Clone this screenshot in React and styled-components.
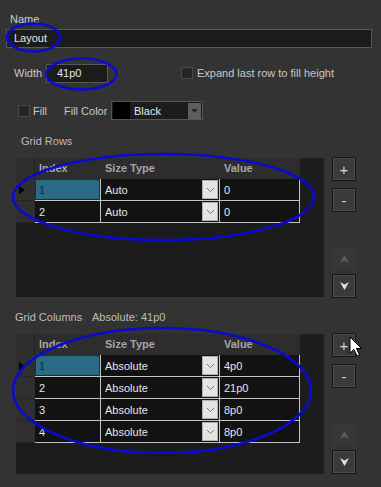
import React from "react";
import styled, { createGlobalStyle } from "styled-components";

const Global = createGlobalStyle`
  html, body {
    margin: 0;
    padding: 0;
    background: #333333;
  }
  body {
    font-family: "Liberation Sans", Arial, sans-serif;
    font-size: 11px;
    color: #cfcfcf;
  }
`;

const Page = styled.div`
  position: relative;
  width: 381px;
  height: 487px;
  box-sizing: border-box;
  padding-top: 12px;
  background: #333333;
  overflow: hidden;
`;

const Label = styled.div`
  height: 14px;
  line-height: 14px;
  margin-left: ${(p) => p.left || 0}px;
  margin-top: ${(p) => p.top || 0}px;
  color: ${(p) => p.color || "#cccccc"};
  white-space: nowrap;
`;

const TextBox = styled.div`
  box-sizing: border-box;
  flex-shrink: 0;
  height: 19px;
  margin-left: ${(p) => p.left || 0}px;
  width: ${(p) => p.w}px;
  background: #1b1b1b;
  border: 1px solid #575757;
  color: #e6e6e6;
  line-height: 17px;
  padding-left: ${(p) => p.pad || 3}px;
  margin-top: ${(p) => p.top || 0}px;
`;

const Row = styled.div`
  display: flex;
  align-items: center;
  margin-top: ${(p) => p.top || 0}px;
  height: ${(p) => p.h || 18}px;
`;

const Check = styled.div`
  box-sizing: border-box;
  flex-shrink: 0;
  width: 12px;
  height: 12px;
  background: #262626;
  border: 1px solid #4a4a4a;
  margin-left: ${(p) => p.left || 0}px;
  margin-right: ${(p) => p.right || 4}px;
`;

const Inline = styled.span`
  flex-shrink: 0;
  width: ${(p) => (p.w ? `${p.w}px` : "auto")};
  margin-left: ${(p) => p.left || 0}px;
  color: ${(p) => p.color || "#c8c8c8"};
  white-space: nowrap;
`;

const Dropdown = styled.div`
  box-sizing: border-box;
  flex-shrink: 0;
  display: flex;
  align-items: center;
  width: 92px;
  height: 19px;
  background: #1c1c1c;
  border: 1px solid #555555;
  padding: 0 1px;
`;

const Swatch = styled.div`
  width: 17px;
  height: 17px;
  background: #000;
`;

const DropText = styled.span`
  flex: 1;
  padding-left: 4px;
  color: #e8e8e8;
`;

const DropArrow = styled.div`
  width: 13px;
  height: 16px;
  background: #5e5e5e;
  display: flex;
  align-items: center;
  justify-content: center;
`;

const Section = styled.div`
  display: flex;
  margin-top: 10px;
  margin-left: 16px;
`;

const Panel = styled.div`
  width: 308px;
  height: ${(p) => p.h}px;
  background: #1c1c1c;
`;

const Grid = styled.div`
  display: grid;
  grid-template-columns: 19px 66px 119px 80px;
  grid-auto-rows: 22px;
  grid-template-rows: 21px;
  width: 284px;
`;

const HeadCell = styled.div`
  box-sizing: border-box;
  background: #2d2d2d;
  color: #a6a6a6;
  font-weight: bold;
  line-height: 21px;
  padding-left: 4px;
  border-right: ${(p) => (p.corner ? "1px solid #232323" : "none")};
`;

const RowHead = styled.div`
  box-sizing: border-box;
  background: #2f2f2f;
  border-bottom: 1px solid #262626;
  display: flex;
  align-items: center;
  padding-left: 3px;
`;

const Cell = styled.div`
  box-sizing: border-box;
  display: flex;
  align-items: center;
  background: ${(p) => (p.selected ? "#2b6a83" : "#121212")};
  color: ${(p) => (p.selected ? "#0f2d3a" : "#e6e6e6")};
  border-right: 1px solid #c4c4c4;
  border-bottom: 1px solid #c4c4c4;
  padding-left: 4px;
  padding-right: 1px;
  box-shadow: ${(p) => (p.selected ? "inset 0 0 0 1px #162f3a" : "none")};
`;

const CellText = styled.span`
  flex: 1;
`;

const ComboBtn = styled.div`
  box-sizing: border-box;
  width: 16px;
  height: 19px;
  background: #e4e4e4;
  border: 1px solid #b0b0b0;
  display: flex;
  align-items: center;
  justify-content: center;
`;

const Side = styled.div`
  display: flex;
  flex-direction: column;
  margin-left: 8px;
  margin-top: -1px;
`;

const SideBtn = styled.div`
  box-sizing: border-box;
  width: 24px;
  height: 24px;
  margin-top: ${(p) => p.top || 0}px;
  background: ${(p) => (p.disabled ? "#373737" : "#3a3a3a")};
  border: 1px solid ${(p) => (p.disabled ? "#353535" : "#151515")};
  box-shadow: ${(p) => (p.disabled ? "none" : "inset 0 0 0 1px #4a4a4a")};
  display: flex;
  align-items: center;
  justify-content: center;
  color: #d6d6d6;
  font-size: 15px;
`;

const Overlay = styled.svg`
  position: absolute;
  left: 0;
  top: 0;
  pointer-events: none;
`;

const Chevron = () => (
  <svg width="9" height="6" viewBox="0 0 9 6">
    <path d="M1 1 L4.5 4.5 L8 1" fill="none" stroke="#777" strokeWidth="1" />
  </svg>
);

const Tri = () => (
  <svg width="7" height="4" viewBox="0 0 7 4">
    <path d="M0 0 H7 L3.5 4 Z" fill="#2a2a2a" />
  </svg>
);

const Pointer = () => (
  <svg width="6" height="8" viewBox="0 0 6 8">
    <path d="M0 0 L6 4 L0 8 Z" fill="#000" />
  </svg>
);

const ArrowIcon = ({ up, color }) => (
  <svg width="11" height="10" viewBox="0 0 11 10">
    <path
      d={up ? "M5.5 1 L10 9 L5.5 6.5 L1 9 Z" : "M1 1 L5.5 3.5 L10 1 L5.5 9 Z"}
      fill={color}
    />
  </svg>
);

const Table = ({ rows, h }) => (
  <Panel h={h}>
    <Grid>
      <HeadCell corner />
      <HeadCell>Index</HeadCell>
      <HeadCell>Size Type</HeadCell>
      <HeadCell>Value</HeadCell>
      {rows.map((r, i) => (
        <React.Fragment key={i}>
          <RowHead>{i === 0 && <Pointer />}</RowHead>
          <Cell selected={i === 0}>{i + 1}</Cell>
          <Cell>
            <CellText>{r.type}</CellText>
            <ComboBtn>
              <Chevron />
            </ComboBtn>
          </Cell>
          <Cell>{r.value}</Cell>
        </React.Fragment>
      ))}
    </Grid>
  </Panel>
);

const SideButtons = () => (
  <Side>
    <SideBtn>+</SideBtn>
    <SideBtn top={7}>-</SideBtn>
    <SideBtn top={35} disabled>
      <ArrowIcon up color="#5c5c5c" />
    </SideBtn>
    <SideBtn top={3}>
      <ArrowIcon color="#e0e0e0" />
    </SideBtn>
  </Side>
);

const gridRows = [
  { type: "Auto", value: "0" },
  { type: "Auto", value: "0" },
];

const gridColumns = [
  { type: "Absolute", value: "4p0" },
  { type: "Absolute", value: "21p0" },
  { type: "Absolute", value: "8p0" },
  { type: "Absolute", value: "8p0" },
];

export default function App() {
  return (
    <Page>
      <Global />
      <Label left={10}>Name</Label>
      <TextBox left={6} w={366} top={3} pad={7}>
        Layout
      </TextBox>

      <Row top={16} h={18}>
        <Inline left={14} w={32}>
          Width
        </Inline>
        <TextBox w={62} pad={10}>
          41p0
        </TextBox>
        <Check left={73} />
        <Inline>Expand last row to fill height</Inline>
      </Row>

      <Row top={19} h={19}>
        <Check left={18} right={3} />
        <Inline w={31}>Fill</Inline>
        <Inline w={47}>Fill Color</Inline>
        <Dropdown>
          <Swatch />
          <DropText>Black</DropText>
          <DropArrow>
            <Tri />
          </DropArrow>
        </Dropdown>
      </Row>

      <Label left={21} top={14} color="#bdbdbd">
        Grid Rows
      </Label>
      <Section>
        <Table rows={gridRows} h={139} />
        <SideButtons />
      </Section>

      <Row top={12} h={14}>
        <Inline left={15} w={77} color="#bdbdbd">
          Grid Columns
        </Inline>
        <Inline color="#bdbdbd">Absolute: 41p0</Inline>
      </Row>
      <Section>
        <Table rows={gridColumns} h={140} />
        <SideButtons />
      </Section>

      <Overlay width="381" height="487" viewBox="0 0 381 487">
        <g fill="none" stroke="#0a0ad0" strokeWidth="2.6">
          <ellipse cx="33.5" cy="37.5" rx="26.5" ry="14" />
          <ellipse cx="81.5" cy="74" rx="35" ry="15.5" />
          <ellipse cx="163.5" cy="197" rx="150.5" ry="43" />
          <ellipse cx="162" cy="390.5" rx="149" ry="62.5" />
        </g>
        <path
          d="M350 337 L350 353 L354 349.5 L357 356 L359.5 355 L356.5 348.5 L361.5 348.5 Z"
          fill="#fff"
          stroke="#000"
          strokeWidth="1"
        />
      </Overlay>
    </Page>
  );
}
